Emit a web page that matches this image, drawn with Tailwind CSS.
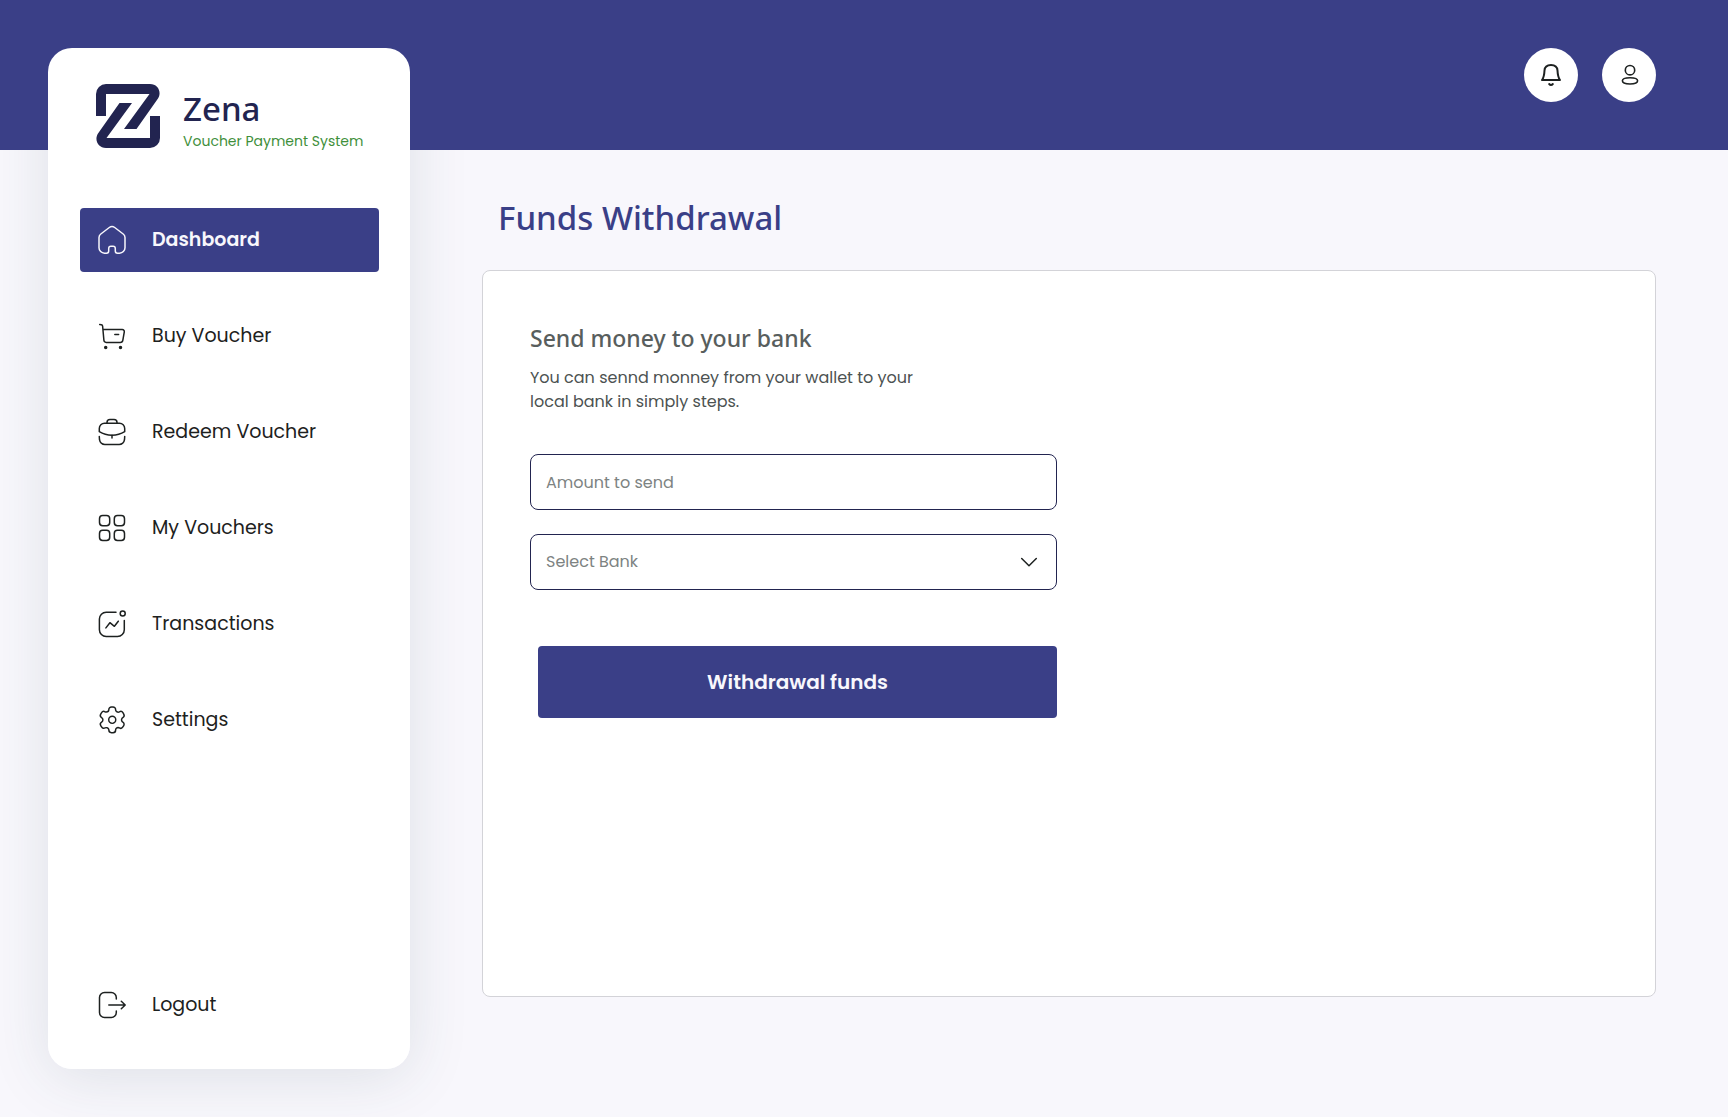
<!DOCTYPE html>
<html lang="en">
<head>
  <meta charset="UTF-8" />
  <meta name="viewport" content="width=device-width, initial-scale=1.0" />
  <title>Zena - Funds Withdrawal</title>
  <script src="https://cdn.jsdelivr.net/npm/@tailwindcss/browser@4"></script>
</head>
<body class="min-h-screen flex flex-col bg-[#f8f7fc] text-[#1d2120] font-['Poppins','Inter',sans-serif]">

<!-- top bar -->
<header class="relative h-[150px] shrink-0 bg-[#3a3f87] flex justify-end items-start gap-6 pt-12 pr-[72px]">
  <button type="button" aria-label="Notifications" class="size-[54px] rounded-full bg-white flex items-center justify-center">
    <svg class="size-7" viewBox="0 0 28 28" fill="none" stroke="currentColor" stroke-width="2" stroke-linecap="round" stroke-linejoin="round">
      <path d="M5 19H23C21.5 17 20.7 14 20.5 9.5C20.3 6 17.6 3.9 14 3.9S7.700 6 7.500 9.500C7.300 14 6.500 17 5 19Z" />
      <path d="M12.2 23C13.2 24.2 14.8 24.2 15.8 23" />
    </svg>
  </button>
  <button type="button" aria-label="Profile" class="size-[54px] rounded-full bg-white flex items-center justify-center">
    <svg class="size-7" viewBox="0 0 28 28" fill="none" stroke="currentColor" stroke-width="1.6">
      <circle cx="15" cy="9.2" r="4.7" />
      <path d="M7.4 19.8C7.4 17.4 10.2 16.7 15 16.7S22.6 17.4 22.6 19.8S19.8 23 15 23S7.4 22.2 7.4 19.8Z" />
    </svg>
  </button>
</header>

<div class="flex-1 flex gap-[72px] pl-12 pr-[72px]">

  <!-- sidebar, its shadow goes under the top bar -->
  <aside class="relative w-[362px] shrink-0 -mt-[102px] mb-12 pl-8 pr-[31px] pt-9 pb-8 flex flex-col bg-white rounded-3xl before:absolute before:inset-0 before:-z-10 before:rounded-3xl before:shadow-[0_8px_60px_rgba(50,75,85,0.13)]">
    <div class="h-16 flex items-start gap-[23px] pl-4 mb-[60px]">
      <svg class="size-16 shrink-0" viewBox="0 0 64 64" fill="#222450">
        <path d="M0 32V10A10 10 0 0 1 10 0H54C62 0 66 8 62 14.5L40.5 45H28L53.5 10H10V32Z" />
        <path d="M64 32V54A10 10 0 0 1 54 64H10C2 64-2 56 2 49.5L23.5 19H36L10.5 54H54V32Z" />
      </svg>
      <div class="pt-[5px]">
        <p class="text-[33px] leading-10 font-medium text-[#222450] font-['Noto_Sans',sans-serif]">Zena</p>
        <p class="text-sm leading-6 text-[#3f8f3b] whitespace-nowrap">Voucher Payment System</p>
      </div>
    </div>

    <nav class="flex-1 flex flex-col gap-8 text-[19px]">
      <a href="#" class="h-16 flex items-center gap-6 pl-4 rounded-sm bg-[#3a3f87] text-[#f8f7fc] font-semibold">
        <svg class="size-8" viewBox="0 0 32 32" fill="none" stroke="currentColor" stroke-width="1.5" stroke-linejoin="round">
          <path d="M12.7 24.5V27A2.2 2.2 0 0 1 10.5 29.2H8.5A5.5 5.5 0 0 1 3 23.7V13.5A4.5 4.5 0 0 1 4.8 10L13.3 3.5A4.5 4.5 0 0 1 18.7 3.5L27.2 10A4.5 4.5 0 0 1 29 13.5V23.7A5.5 5.5 0 0 1 23.5 29.2H21.5A2.2 2.2 0 0 1 19.3 27V24.5A2.2 2.2 0 0 0 17.1 22.3H14.9A2.2 2.2 0 0 0 12.7 24.5Z" />
        </svg>
        Dashboard
      </a>
      <a href="#" class="h-16 flex items-center gap-6 pl-4">
        <svg class="size-8" viewBox="0 0 32 32" fill="none" stroke="currentColor" stroke-width="1.5" stroke-linecap="round" stroke-linejoin="round">
          <path d="M3.7 4.5L5.3 4.7A1.5 1.5 0 0 1 6.6 6L7.9 20.3A2.3 2.3 0 0 0 10.2 22.4H24.3A2.5 2.5 0 0 0 26.8 20.3L28.3 11.8A2 2 0 0 0 26.3 9.5H7" />
          <path d="M18.8 14.5H22.6" />
          <circle cx="9.7" cy="27.5" r="1" fill="currentColor" />
          <circle cx="24.5" cy="27.5" r="1" fill="currentColor" />
        </svg>
        Buy Voucher
      </a>
      <a href="#" class="h-16 flex items-center gap-6 pl-4">
        <svg class="size-8" viewBox="0 0 32 32" fill="none" stroke="currentColor" stroke-width="1.5" stroke-linecap="round" stroke-linejoin="round">
          <path d="M11 7.3V6.5A3 3 0 0 1 14 3.5H18A3 3 0 0 1 21 6.5V7.3" />
          <path d="M8.5 7.3H23.5A5.2 5.2 0 0 1 28.7 12.5V15.7C25 18 20.5 19.2 16 19.2S7 18 3.3 15.7V12.5A5.2 5.2 0 0 1 8.5 7.3Z" />
          <path d="M16 19.2V22" />
          <path d="M3.3 20.5L3.5 23.7A5.4 5.4 0 0 0 8.9 28.4H23.1A5.4 5.4 0 0 0 28.5 23.7L28.7 20.5" />
        </svg>
        Redeem Voucher
      </a>
      <a href="#" class="h-16 flex items-center gap-6 pl-4">
        <svg class="size-8" viewBox="0 0 32 32" fill="none" stroke="currentColor" stroke-width="1.5">
          <rect x="3.5" y="3.5" width="10.2" height="10.2" rx="3.2" />
          <rect x="18.3" y="3.5" width="10.2" height="10.2" rx="3.2" />
          <rect x="3.5" y="18.3" width="10.2" height="10.2" rx="3.2" />
          <rect x="18.3" y="18.3" width="10.2" height="10.2" rx="3.2" />
        </svg>
        My Vouchers
      </a>
      <a href="#" class="h-16 flex items-center gap-6 pl-4">
        <svg class="size-8" viewBox="0 0 32 32" fill="none" stroke="currentColor" stroke-width="1.5" stroke-linecap="round" stroke-linejoin="round">
          <path d="M20 4.2H10.2A6.8 6.8 0 0 0 3.4 11V21.7A6.8 6.8 0 0 0 10.2 28.5H21.5A6.8 6.8 0 0 0 28.3 21.7V12.5" />
          <circle cx="26.7" cy="5.6" r="2.5" />
          <path d="M9.9 19.9L13.9 14.7L18.4 18.3L22.3 13.2" />
        </svg>
        Transactions
      </a>
      <a href="#" class="h-16 flex items-center gap-6 pl-4">
        <svg class="size-8" viewBox="0 0 24 24" fill="none" stroke="currentColor" stroke-width="1.1" stroke-linejoin="round">
          <path d="M20.806 7.624L20.184 6.544C19.657 5.630 18.491 5.314 17.575 5.839C17.140 6.095 16.620 6.168 16.131 6.041C15.641 5.914 15.222 5.598 14.967 5.161C14.802 4.884 14.714 4.568 14.710 4.246C14.725 3.729 14.530 3.228 14.170 2.858C13.809 2.487 13.314 2.278 12.797 2.278H11.543C11.037 2.278 10.551 2.480 10.194 2.839C9.836 3.198 9.637 3.685 9.639 4.191C9.624 5.237 8.772 6.077 7.726 6.077C7.404 6.073 7.088 5.985 6.811 5.820C5.896 5.296 4.729 5.611 4.202 6.525L3.534 7.624C3.008 8.536 3.319 9.703 4.230 10.232C4.822 10.574 5.186 11.206 5.186 11.889C5.186 12.573 4.822 13.204 4.230 13.546C3.320 14.072 3.009 15.235 3.534 16.145L4.166 17.235C4.412 17.680 4.826 18.008 5.316 18.147C5.806 18.287 6.330 18.225 6.774 17.976C7.211 17.721 7.731 17.652 8.219 17.782C8.707 17.913 9.123 18.233 9.374 18.672C9.538 18.949 9.627 19.265 9.630 19.587C9.630 20.644 10.487 21.500 11.543 21.500H12.797C13.850 21.500 14.705 20.649 14.710 19.596C14.708 19.088 14.909 18.600 15.268 18.241C15.627 17.881 16.115 17.681 16.623 17.683C16.945 17.692 17.259 17.780 17.539 17.939C18.452 18.465 19.618 18.154 20.147 17.244L20.806 16.145C21.062 15.708 21.132 15.186 21.001 14.696C20.870 14.207 20.550 13.789 20.111 13.537C19.672 13.284 19.351 12.867 19.221 12.377C19.090 11.887 19.160 11.366 19.415 10.928C19.581 10.638 19.821 10.398 20.111 10.232C21.016 9.703 21.326 8.543 20.806 7.633Z" />
          <circle cx="12.175" cy="11.889" r="2.636" />
        </svg>
        Settings
      </a>
      <a href="#" class="h-16 mt-auto flex items-center gap-6 pl-4">
        <svg class="size-8" viewBox="0 0 32 32" fill="none" stroke="currentColor" stroke-width="1.5" stroke-linecap="round" stroke-linejoin="round">
          <path d="M20.3 10V8.5A5 5 0 0 0 15.3 3.5H8.5A5 5 0 0 0 3.5 8.5V23.5A5 5 0 0 0 8.5 28.5H15.3A5 5 0 0 0 20.3 23.5V22" />
          <path d="M12.8 16H29M25.3 12.2L29.2 16L25.3 19.8" />
        </svg>
        Logout
      </a>
    </nav>
  </aside>

  <!-- content -->
  <main class="flex-1 flex flex-col pt-11 pb-[120px]">
    <h1 class="pl-4 mb-7 text-[33px] leading-[48px] font-medium text-[#3a3f87] font-['Noto_Sans',sans-serif]">Funds Withdrawal</h1>

    <section class="flex-1 bg-white border border-[#d3d3d8] rounded-lg p-[47px]">
      <h2 class="text-[23px] leading-10 font-medium text-[#585e5d] font-['Noto_Sans',sans-serif]">Send money to your bank</h2>
      <p class="max-w-[420px] text-base leading-6 text-[#4c5251] mt-2">You can sennd monney from your wallet to your local bank in simply steps.</p>

      <form class="w-[527px] max-w-full mt-10 flex flex-col gap-6">
        <input type="text" inputmode="decimal" aria-label="Amount to send" placeholder="Amount to send" class="w-full h-14 px-[15px] rounded-lg border border-[#222450] text-base placeholder:text-[#7d8382]" />
        <div class="relative">
          <select aria-label="Select Bank" class="w-full h-14 block px-[15px] rounded-lg border border-[#222450] text-base text-[#7d8382] appearance-none">
            <option>Select Bank</option>
          </select>
          <svg class="absolute right-4 top-4 size-6 pointer-events-none" viewBox="0 0 24 24" fill="none" stroke="currentColor" stroke-width="1.5" stroke-linecap="round" stroke-linejoin="round">
            <path d="M4.7 8.5L12 15.7L19.3 8.5" />
          </svg>
        </div>
        <button type="submit" class="h-[72px] mt-8 ml-2 rounded-sm bg-[#3a3f87] text-[#f8f7fc] text-xl font-semibold">Withdrawal funds</button>
      </form>
    </section>
  </main>
</div>

</body>
</html>
